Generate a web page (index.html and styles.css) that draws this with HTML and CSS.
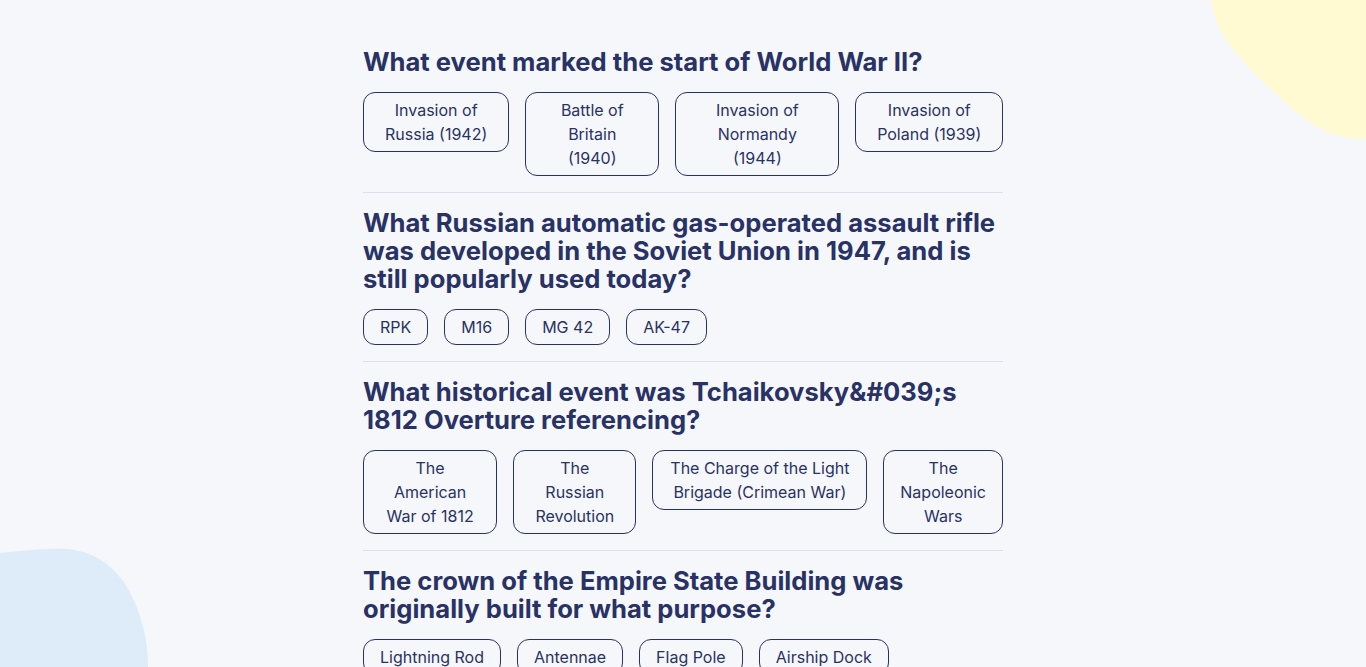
FILE: index.html
```html
<!DOCTYPE html>
<html lang="en">
<head>
<meta charset="utf-8">
<title>Quizzical</title>
<link rel="stylesheet" href="styles.css">
</head>
<body>
<svg class="blob blob-yellow" width="160" height="145" viewBox="1206 0 160 145" aria-hidden="true"><path d="M1211 0 C1216 35 1240 60 1272 90 C1305 121 1325 139 1366 139 L1366 0 Z" fill="#FFFAD1"/></svg>
<svg class="blob blob-blue" width="150" height="120" viewBox="0 547 150 120" aria-hidden="true"><path d="M0 553 C22 551 45 548 66 549 C100 551 124 573 137 608 C145 629 148 648 148 667 L0 667 Z" fill="#DEEBF8"/></svg>
<main class="quiz">
  <section class="question">
    <h2 class="q-title">What event marked the start of World War II?</h2>
    <div class="answers">
      <button class="answer">Invasion of Russia (1942)</button>
      <button class="answer">Battle of Britain (1940)</button>
      <button class="answer">Invasion of Normandy (1944)</button>
      <button class="answer">Invasion of Poland (1939)</button>
    </div>
  </section>
  <section class="question">
    <h2 class="q-title">What Russian automatic gas-operated assault rifle was developed in the Soviet Union in 1947, and is still popularly used today?</h2>
    <div class="answers">
      <button class="answer">RPK</button>
      <button class="answer">M16</button>
      <button class="answer">MG 42</button>
      <button class="answer">AK-47</button>
    </div>
  </section>
  <section class="question">
    <h2 class="q-title">What historical event was Tchaikovsky&amp;#039;s 1812 Overture referencing?</h2>
    <div class="answers">
      <button class="answer">The American War of 1812</button>
      <button class="answer">The Russian Revolution</button>
      <button class="answer">The Charge of the Light Brigade (Crimean War)</button>
      <button class="answer">The Napoleonic Wars</button>
    </div>
  </section>
  <section class="question">
    <h2 class="q-title">The crown of the Empire State Building was originally built for what purpose?</h2>
    <div class="answers">
      <button class="answer">Lightning Rod</button>
      <button class="answer">Antennae</button>
      <button class="answer">Flag Pole</button>
      <button class="answer">Airship Dock</button>
    </div>
  </section>
</main>
</body>
</html>
```
FILE: styles.css
```css
* { box-sizing: border-box; }
html, body { margin: 0; padding: 0; }
body {
  background: #F5F7FB;
  font-family: Inter, "Noto Sans", sans-serif;
  color: #293264;
  min-height: 100vh;
  overflow: hidden;
}
.blob { position: absolute; display: block; }
.blob-yellow { top: 0; right: 0; }
.blob-blue { bottom: 0; left: 0; }
.quiz {
  position: relative;
  width: 640px;
  margin: 0 auto;
  padding-top: 48px;
  display: flex;
  flex-direction: column;
}
.question {
  padding-bottom: 16px;
  border-bottom: 0.8px solid #DBDEF0;
  margin-bottom: 16px;
}
.q-title {
  margin: 0 0 16px;
  font-size: 25.6px;
  line-height: 28px;
  font-weight: 700;
  color: #293264;
}
.answers {
  display: flex;
  gap: 16px;
  align-items: flex-start;
}
.answer {
  flex: 0 1 auto;
  font-family: Inter, "Noto Sans", sans-serif;
  font-size: 16px;
  line-height: 24px;
  color: #293264;
  background: transparent;
  border: 0.8px solid #293264;
  border-radius: 12px;
  padding: 5px 16px;
  text-align: center;
  cursor: pointer;
}
```
